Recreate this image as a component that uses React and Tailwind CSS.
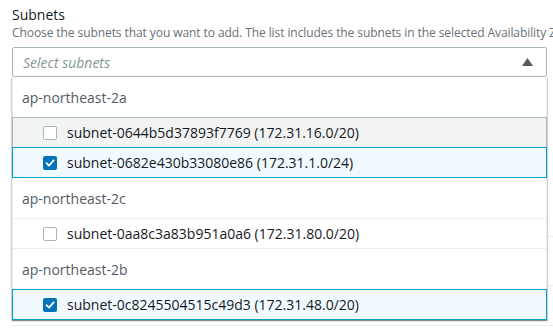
import React from "react";

const groups = [
  {
    zone: "ap-northeast-2a",
    subnets: [
      { id: "subnet-0644b5d37893f7769", cidr: "172.31.16.0/20", checked: false, hover: true },
      { id: "subnet-0682e430b33080e86", cidr: "172.31.1.0/24", checked: true },
    ],
  },
  {
    zone: "ap-northeast-2c",
    subnets: [{ id: "subnet-0aa8c3a83b951a0a6", cidr: "172.31.80.0/20", checked: false }],
  },
  {
    zone: "ap-northeast-2b",
    subnets: [{ id: "subnet-0c8245504515c49d3", cidr: "172.31.48.0/20", checked: true }],
  },
];

function Checkbox({ checked }) {
  if (checked) {
    return (
      <span className="w-[14px] h-[14px] rounded-[2px] bg-[#0073bb] flex items-center justify-center shrink-0">
        <svg width="10" height="10" viewBox="0 0 10 10" fill="none">
          <path d="M1.5 5.2 L4 7.6 L8.6 2.4" stroke="white" strokeWidth="1.8" strokeLinecap="round" strokeLinejoin="round" />
        </svg>
      </span>
    );
  }
  return <span className="w-[14px] h-[14px] rounded-[2px] border border-[#aab7b8] bg-white shrink-0" />;
}

function Row({ s }) {
  // selected rows get a blue outline, the hovered one a grey one
  let cls = "border-y border-[#eaeded] bg-white";
  if (s.checked) cls = "border border-[#00a1c9] bg-[#f1faff] -mx-px relative z-10";
  else if (s.hover) cls = "border border-[#aab7b8] bg-[#f2f3f3] -mx-px relative z-10";
  return (
    <div className={`h-[31px] -mt-px flex items-center pl-[30px] gap-[10px] text-[14px] text-[#16191f] ${cls}`}>
      <Checkbox checked={s.checked} />
      <span className="whitespace-nowrap">
        {s.id} ({s.cidr})
      </span>
    </div>
  );
}

export default function App() {
  return (
    <div className="w-[553px] h-[331px] overflow-hidden bg-white relative font-['Open_Sans',sans-serif] text-[#16191f]">
      {/* lines of the form under the open dropdown */}
      <div className="absolute left-[548px] right-0 top-[236px] h-px bg-[#eaeded]" />
      <div className="absolute left-[548px] right-0 top-[285px] h-px bg-[#eaeded]" />
      <div className="absolute left-3 right-0 top-[325px] h-px bg-[#eaeded]" />

      <div className="pl-3 pt-[5px]">
        <div className="text-[14px] leading-[20px]">Subnets</div>
        <div className="text-[12px] leading-[16px] text-[#687078] whitespace-nowrap tracking-[-0.08px]">
          Choose the subnets that you want to add. The list includes the subnets in the selected Availability Zones.
        </div>
      </div>

      <div className="ml-3 w-[535px] mt-[6px]">
        <div className="h-[30px] border border-[#aab7b8] rounded-[2px] flex items-center justify-between pl-[10px] pr-[13px]">
          <span className="italic text-[14px] text-[#879596]">Select subnets</span>
          <svg width="11" height="8" viewBox="0 0 11 8">
            <path d="M5.5 0 L11 8 L0 8 Z" fill="#545b64" />
          </svg>
        </div>

        <div className="relative z-10 bg-white border-x border-[#eaeded] shadow-[0_1px_1px_0_rgba(0,28,36,0.3),1px_1px_1px_0_rgba(0,28,36,0.15),-1px_1px_1px_0_rgba(0,28,36,0.15)]">
          {groups.map((g) => (
            <div key={g.zone}>
              <div className="h-[41px] flex items-center pl-[9px] text-[14px] text-[#545b64]">{g.zone}</div>
              {g.subnets.map((s) => (
                <Row key={s.id} s={s} />
              ))}
            </div>
          ))}
        </div>
      </div>
    </div>
  );
}
